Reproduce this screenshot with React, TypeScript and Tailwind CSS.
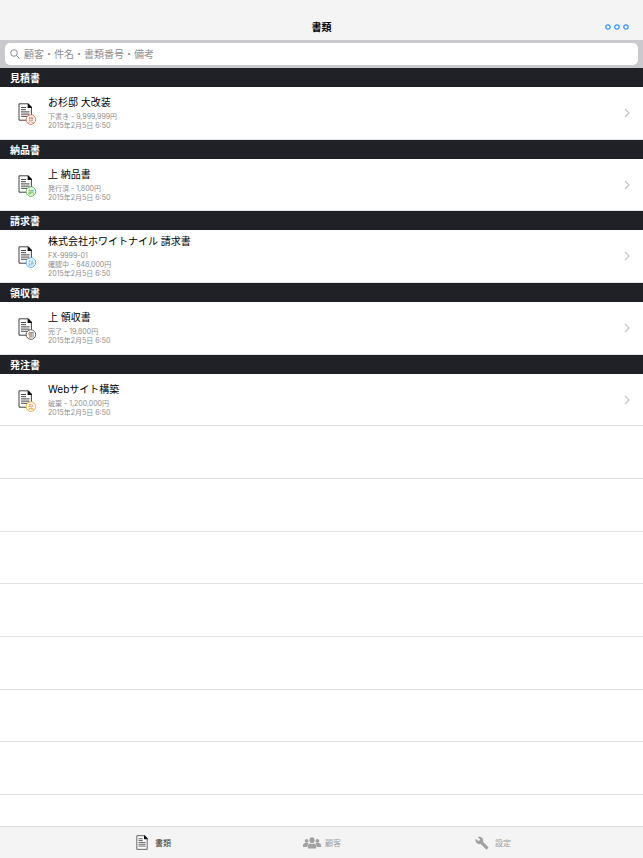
import React from "react";

type Entry = {
  section: string;
  title: string;
  lines: string[];
  mark: string;
  color: string;
};

const entries: Entry[] = [
  { section: "見積書", title: "お杉邸 大改装", lines: ["下書き - 9,999,999円", "2015年2月5日 6:50"], mark: "見", color: "#e8664a" },
  { section: "納品書", title: "上 納品書", lines: ["発行済 - 1,800円", "2015年2月5日 6:50"], mark: "納", color: "#3cb54a" },
  { section: "請求書", title: "株式会社ホワイトナイル 請求書", lines: ["FX-9999-01", "確認中 - 648,000円", "2015年2月5日 6:50"], mark: "請", color: "#45aee8" },
  { section: "領収書", title: "上 領収書", lines: ["完了 - 19,800円", "2015年2月5日 6:50"], mark: "領", color: "#555555" },
  { section: "発注書", title: "Webサイト構築", lines: ["破棄 - 1,200,000円", "2015年2月5日 6:50"], mark: "発", color: "#f5a02c" },
];

const emptyRows = [1, 2, 3, 4, 5, 6, 7];

function PageShape() {
  return (
    <>
      <path d="M1 .8H10L13.4 4.2V17.2H1Z" fill="#fff" stroke="#444" strokeWidth="1" />
      <path d="M9.6 .4H10.4L13.9 4V5H9.6Z" fill="#111" />
      <path d="M3 4.5H8M3 6.7H8M3 8.9H11.5M3 11.1H11.5M3 13.3H11.5" stroke="#444" strokeWidth="1" />
    </>
  );
}

function DocumentIcon({ mark, color }: { mark: string; color: string }) {
  return (
    <svg className="h-6 w-5 shrink-0" viewBox="0 -2 20 24" fill="none" aria-hidden="true">
      <PageShape />
      <circle cx="12.9" cy="16.6" r="4.8" fill="#fff" stroke={color} strokeWidth="0.9" />
      <text x="12.9" y="18.8" fontSize="6" textAnchor="middle" fill={color}>
        {mark}
      </text>
    </svg>
  );
}

function Chevron() {
  return (
    <svg className="h-[10px] w-[6px] shrink-0" viewBox="0 0 6 10" fill="none" aria-hidden="true">
      <path d="M1 1L5 5L1 9" stroke="#c3c3c8" strokeWidth="1.2" />
    </svg>
  );
}

function PeopleIcon() {
  return (
    <svg className="h-3 w-[18px]" viewBox="0 0 18 12" fill="currentColor" aria-hidden="true">
      <circle cx="3.6" cy="3.9" r="1.9" />
      <circle cx="14.4" cy="3.9" r="1.9" />
      <path d="M0 10V8.2Q0 6.2 2 6H5Q5.6 6 5.6 6.4Q4.4 7.4 4.3 10Z" />
      <path d="M18 10V8.2Q18 6.2 16 6H13Q12.4 6 12.4 6.4Q13.6 7.4 13.7 10Z" />
      <ellipse cx="9" cy="3.2" rx="2.6" ry="3" />
      <path d="M4.8 11.6V9.2Q4.8 6.9 7.2 6.6Q9 7.6 10.8 6.6Q13.2 6.9 13.2 9.2V11.6Z" />
    </svg>
  );
}

function WrenchIcon() {
  return (
    <svg className="h-[14px] w-[14px]" viewBox="0 0 24 24" fill="currentColor" aria-hidden="true">
      <path d="M22.7 19l-9.1-9.1c.9-2.3.4-5-1.5-6.9-2-2-5-2.4-7.4-1.3L9 6 6 9 1.6 4.7C.4 7.1.9 10.1 2.9 12.1c1.9 1.9 4.6 2.4 6.9 1.5l9.1 9.1c.4.4 1 .4 1.4 0l2.3-2.3c.5-.4.5-1.1.1-1.4z" />
    </svg>
  );
}

function Tab({ label, active, children }: { label: string; active?: boolean; children: React.ReactNode }) {
  return (
    <button
      type="button"
      className={`flex items-center justify-center gap-[3px] text-[8px] leading-3 ${active ? "text-[#333]" : "text-[#a0a0a0]"}`}
    >
      <span className="flex w-5 justify-center">{children}</span>
      {label}
    </button>
  );
}

export default function App() {
  return (
    <div className="flex min-h-screen flex-col bg-white font-[Inter,'Noto_Sans_CJK_JP',sans-serif] text-black">
      <header className="grid h-10 shrink-0 grid-cols-[1fr_auto_1fr] items-end bg-[#f4f4f4] pb-[5px]">
        <h1 className="col-start-2 text-[10px] leading-4 font-bold">書類</h1>
        <button type="button" aria-label="メニュー" className="mr-[14px] flex h-4 items-center justify-self-end">
          <svg className="h-[6px] w-6" viewBox="0 0 24 6" fill="none" stroke="#2f95ff" strokeWidth="1.2" aria-hidden="true">
            <circle cx="3" cy="3" r="2.2" />
            <circle cx="12" cy="3" r="2.2" />
            <circle cx="21" cy="3" r="2.2" />
          </svg>
        </button>
      </header>

      <div className="h-7 shrink-0 bg-[#c9c9ce] px-[5px] pt-[3px] pb-[3px]">
        <label className="flex h-full items-center gap-1 rounded-[5px] bg-white px-[5px]">
          <svg className="h-[10px] w-[10px] shrink-0" viewBox="0 0 10 10" fill="none" stroke="#8e8e93" strokeWidth="1" aria-hidden="true">
            <circle cx="4" cy="4" r="3.3" />
            <path d="M6.4 6.4L9.4 9.4" />
          </svg>
          <input
            type="search"
            aria-label="検索"
            placeholder="顧客・件名・書類番号・備考"
            className="min-w-0 flex-1 text-[10px] leading-4 outline-none placeholder:text-[#8e8e93]"
          />
        </label>
      </div>

      <main className="flex grow flex-col">
        {entries.map((e) => (
          <section key={e.section} className="contents">
            <h2 className="h-[19px] shrink-0 bg-[#202126] pt-px pl-[10px] text-[10px] leading-[19px] font-bold text-white">
              {e.section}
            </h2>
            <a href="#" className="flex min-h-[52px] shrink-0 grow basis-[0px] items-center border-b border-[#e2e2e4] pr-[13px] pl-[18px]">
              <DocumentIcon mark={e.mark} color={e.color} />
              <div className="ml-[10px] flex-1">
                <p className="mb-1 text-[10px] leading-3">{e.title}</p>
                {e.lines.map((line) => (
                  <p key={line} className="text-[7px] leading-[9px] text-[#8e8e8e]">
                    {line}
                  </p>
                ))}
              </div>
              <Chevron />
            </a>
          </section>
        ))}
        {emptyRows.map((n) => (
          <div key={n} className="min-h-[52px] shrink-0 grow basis-[0px] border-b border-[#e2e2e4]" />
        ))}
        <div className="h-[31px] shrink-0" />
      </main>

      <nav className="h-8 shrink-0 border-t border-[#dcdcdc] bg-[#f4f4f4]">
        <div className="mx-auto grid h-full max-w-[510px] grid-cols-3">
          <Tab label="書類" active>
            <svg className="h-[15px] w-3" viewBox="0 0 14.4 18" fill="none" aria-hidden="true">
              <PageShape />
            </svg>
          </Tab>
          <Tab label="顧客">
            <PeopleIcon />
          </Tab>
          <Tab label="設定">
            <WrenchIcon />
          </Tab>
        </div>
      </nav>
    </div>
  );
}
